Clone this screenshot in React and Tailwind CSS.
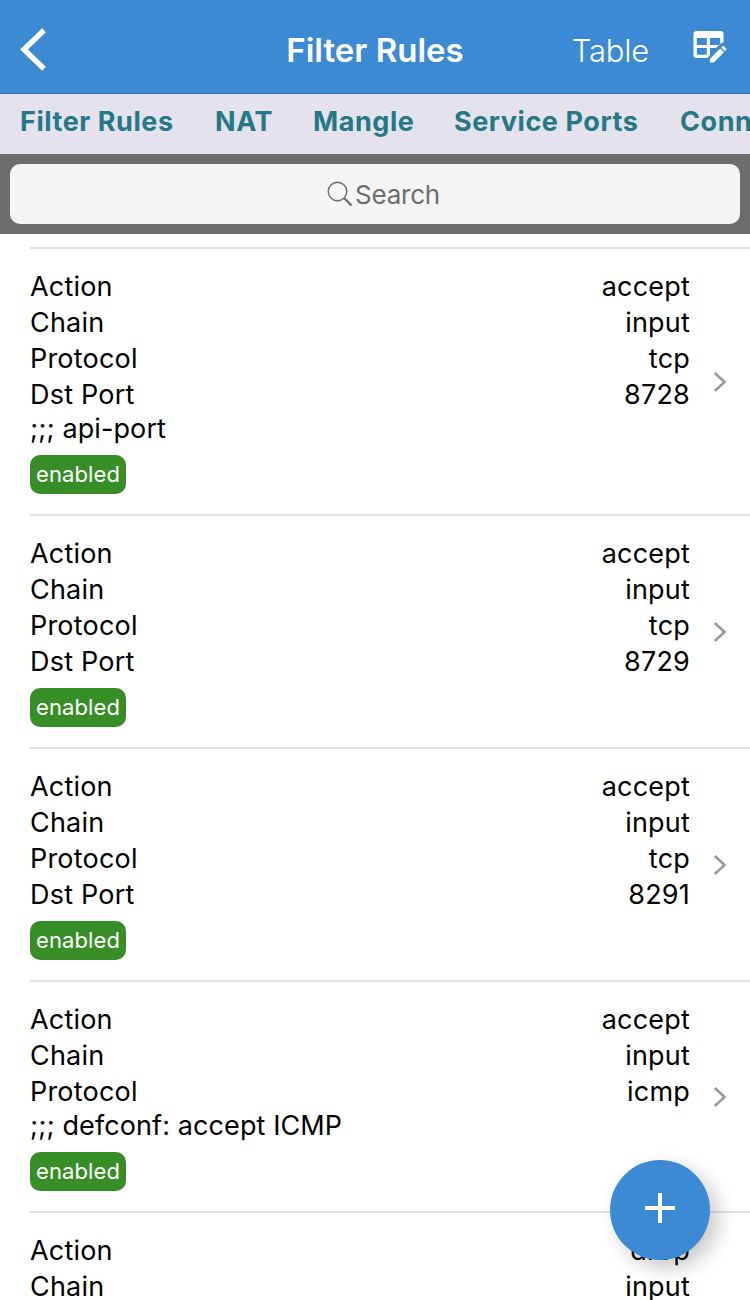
import React from "react";

const tabs = [
  { label: "Filter Rules", w: "w-[154px]" },
  { label: "NAT", w: "w-[57px]" },
  { label: "Mangle", w: "w-[100px]" },
  { label: "Service Ports", w: "w-[185px]" },
  { label: "Connections", w: "w-[180px]" },
];

const rules = [
  { fields: [["Action", "accept"], ["Chain", "input"], ["Protocol", "tcp"], ["Dst Port", "8728"]], comment: ";;; api-port" },
  { fields: [["Action", "accept"], ["Chain", "input"], ["Protocol", "tcp"], ["Dst Port", "8729"]] },
  { fields: [["Action", "accept"], ["Chain", "input"], ["Protocol", "tcp"], ["Dst Port", "8291"]] },
  { fields: [["Action", "accept"], ["Chain", "input"], ["Protocol", "icmp"]], comment: ";;; defconf: accept ICMP" },
  { fields: [["Action", "drop"], ["Chain", "input"]], tall: true },
];

function Header() {
  return (
    <header className="grid h-[94px] shrink-0 grid-cols-[1fr_auto_1fr] items-center border-b border-[#2b69a8] bg-[#3b8ad3] pt-2 text-white">
      <svg className="-mt-0.5 ml-5 h-[43px] w-[27px]" viewBox="0 0 27 43" fill="none" stroke="currentColor" strokeWidth="5.4">
        <path d="M24 2.2L4 21.5L24 40.8" />
      </svg>
      <h1 className="text-[33px] font-semibold tracking-[0px]">Filter Rules</h1>
      <div className="flex items-center justify-end pr-[23px]">
        <span className="pt-px text-[31px] font-light tracking-[-0.2px]">Table</span>
        <svg className="-mt-2 ml-[43px] h-[34px] w-[35px]" viewBox="0 0 35 34" fill="none">
          <path fill="currentColor" fillRule="evenodd" d="M4.500 1H28.500A3 3 0 0 1 31.500 4V12.500Q29.500 12.300 28 14L24 18H18V24L14.500 28H4.500A3 3 0 0 1 1.500 25V4A3 3 0 0 1 4.500 1ZM4.800 8V15H14.800V8ZM18 8V15H28.200V8ZM4.800 18V24.700H14.800V18Z" />
          <path fill="currentColor" d="M13 24.700H18V25.200L15.500 28H13ZM18 28.700L28.200 18.500L32 22.300L21.800 32.500H18ZM29.300 17.400l1.300-1.300q.6-.6 1.200 0l2.400 2.400q.6.600 0 1.200L32.900 21Z" />
        </svg>
      </div>
    </header>
  );
}

function Rule({ fields, comment, tall }) {
  return (
    <li className={"ml-[30px] flex shrink-0 items-center border-t-2 border-[#e2e2e8] py-5 " + (tall ? "h-[233px]" : "")}>
      <div className={"flex w-[660px] shrink-0 flex-col items-start " + (tall ? "self-start" : "")}>
        {fields.map(([name, value]) => (
          <div key={name} className="flex h-9 w-full items-center justify-between">
            <span>{name}</span>
            <span>{value}</span>
          </div>
        ))}
        {comment && <p className="flex h-[34px] items-center pb-0.5 tracking-[0.1px]">{comment}</p>}
        <span className="mt-2 flex h-[39px] w-24 items-center justify-center rounded-[10px] bg-[#388e26] text-[22px] tracking-[0.1px] text-white">
          enabled
        </span>
      </div>
      <svg className="ml-[23px] h-[22px] w-[14px] shrink-0" viewBox="0 0 14 22" fill="none" stroke="#999999" strokeWidth="2.6">
        <path d="M1.800 2L11.500 11L1.800 20" />
      </svg>
    </li>
  );
}

export default function App() {
  return (
    <div className="relative flex h-[1300px] w-[750px] flex-col overflow-hidden bg-white font-['Inter',sans-serif] text-[27px] tracking-[0.2px] text-black">
      <Header />
      <nav className="flex h-[60px] shrink-0 gap-[41px] overflow-hidden bg-[#e4e2ed] pl-5 pt-[9px] text-[27px] font-bold leading-[38px] tracking-[0.55px] text-[#267885]">
        {tabs.map((t) => (
          <a key={t.label} className={"shrink-0 whitespace-nowrap " + t.w}>{t.label}</a>
        ))}
      </nav>
      <div className="h-20 shrink-0 bg-[#6d6d6d] p-2.5">
        <div className="flex h-[60px] items-center justify-center gap-0.5 rounded-[10px] bg-[#f4f4f4] pl-[17px] text-[#6d6d6d]">
          <svg className="h-[26px] w-[26px]" viewBox="0 0 26 26" fill="none" stroke="currentColor">
            <circle cx="10.500" cy="10.500" r="9.300" strokeWidth="1.400" />
            <path d="M17 17L24.500 24.500" strokeWidth="2.400" />
          </svg>
          <span className="text-[26px] tracking-[-0.2px]">Search</span>
        </div>
      </div>
      <ul className="flex flex-col pt-[13px]">
        {rules.map((r, i) => (
          <Rule key={i} {...r} />
        ))}
      </ul>
      <button className="absolute left-[610px] top-[1160px] flex h-[100px] w-[100px] items-center justify-center rounded-full bg-[#3b8ad3] pb-1 text-white shadow-[8px_8px_20px_rgba(0,0,0,0.22)]">
        <svg className="h-[30px] w-[30px]" viewBox="0 0 30 30" stroke="currentColor" strokeWidth="4">
          <path d="M15 0V30M0 15H30" />
        </svg>
      </button>
    </div>
  );
}
